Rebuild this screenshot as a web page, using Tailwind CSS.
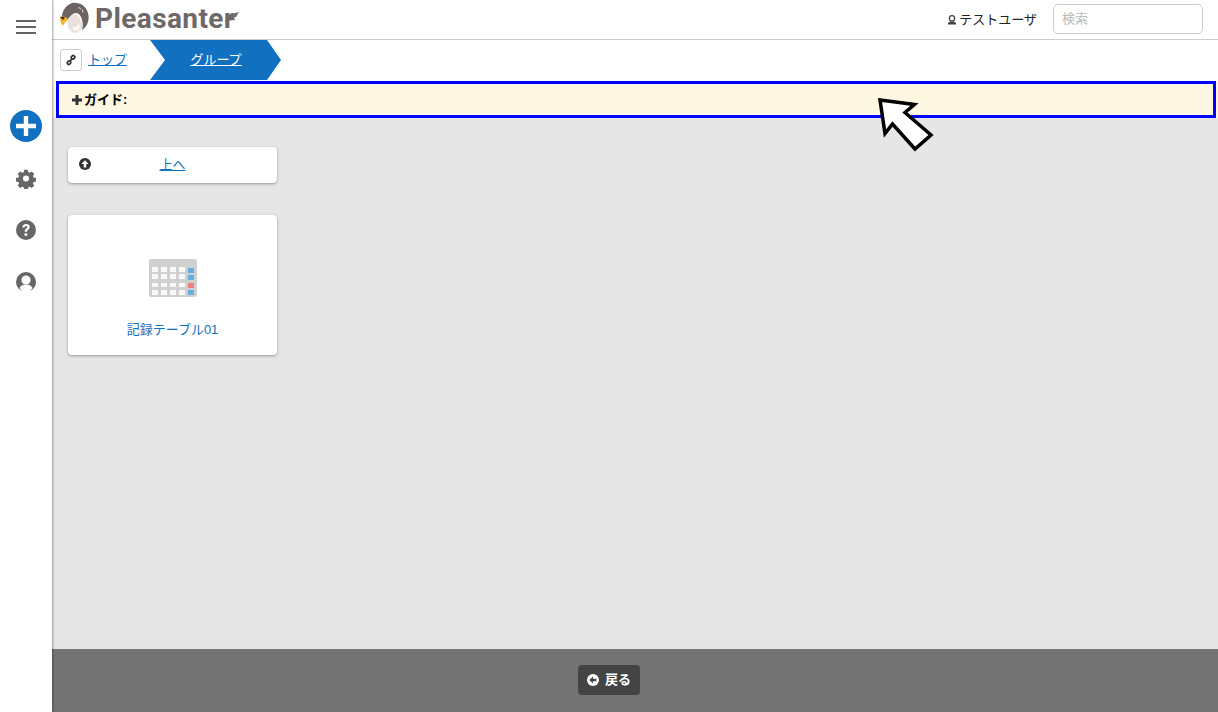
<!DOCTYPE html>
<html lang="ja">
<head>
    <meta charset="UTF-8">
    <script src="https://cdn.jsdelivr.net/npm/@tailwindcss/browser@4"></script>
    <title>Pleasanter</title>
</head>
<body class="bg-white">
    <div class="relative flex w-[1218px] h-[712px] overflow-hidden text-[13px] text-black font-['Liberation_Sans','Noto_Sans_CJK_JP',sans-serif]">
        <!-- side menu -->
        <div class="relative z-10 flex flex-col items-center w-[52px] shrink-0 bg-white shadow-[1px_0_2px_rgba(0,0,0,0.35)]">
            <div class="flex flex-col gap-[4px] w-[20px] mt-[20px]">
                <div class="h-[2px] bg-[#666]"></div>
                <div class="h-[2px] bg-[#666]"></div>
                <div class="h-[2px] bg-[#666]"></div>
            </div>
            <div class="relative w-[32px] h-[32px] mt-[76px] rounded-full bg-[#1170bf]">
                <svg viewBox="0 0 32 32" class="w-[32px] h-[32px]"><path d="M13.800 6h4.400v7.800H26v4.400h-7.800V26h-4.400v-7.800H6v-4.400h7.800z" fill="#fff"/></svg>
            </div>
            <svg viewBox="0 0 24 24" class="w-[22px] h-[22px] mt-[25px]" fill="#666"><path fill-rule="evenodd" d="M10 2.500h4l.6 2.800 1.700.7 2.400-1.600 2.800 2.900-1.500 2.400.7 1.700 2.800.6v4l-2.800.6-.7 1.700 1.500 2.400-2.800 2.800-2.400-1.500-1.700.7-.6 2.800h-4l-.6-2.800-1.700-.7-2.400 1.500-2.800-2.800 1.500-2.400-.7-1.700-2.800-.6v-4l2.800-.6.7-1.700-1.500-2.400 2.800-2.900 2.400 1.600 1.700-.7zM12 9a3.500 3.500 0 1 0 0 7 3.500 3.500 0 0 0 0-7z" transform="translate(.6 .6) scale(.95)"/></svg>
            <svg viewBox="0 0 20 20" class="w-[20px] h-[20px] mt-[31px]"><circle cx="10" cy="10" r="10" fill="#666"/><path d="M6.300 7.600c.1-2.200 1.700-3.500 3.800-3.500 2.200 0 3.700 1.300 3.700 3 0 2.500-2.700 2.500-2.700 4.600H8.700c0-3 2.500-3.200 2.500-4.500 0-.7-.5-1.100-1.200-1.100-.8 0-1.200.5-1.300 1.500z" fill="#fff"/><circle cx="9.900" cy="14.500" r="1.500" fill="#fff"/></svg>
            <svg viewBox="0 0 20 20" class="w-[20px] h-[20px] mt-[32px]"><circle cx="10" cy="10" r="10" fill="#666"/><circle cx="10" cy="8" r="4.600" fill="#fff"/><path d="M3.500 16c1.200-2.600 3.500-3.600 6.500-3.600s5.300 1 6.500 3.600l-3 4h-7z" fill="#fff"/></svg>
        </div>

        <!-- main -->
        <div class="flex flex-col flex-1 min-w-0">
            <header class="flex items-center h-[40px] shrink-0 border-b border-[#ccc] bg-white">
                <svg viewBox="0 0 32 32" class="w-[32px] h-[32px] ml-[6px] mb-[3px]">
                    <path d="M10 17c1-3 5-5 9-4 3 2 5 7 5 13-2 3-5 5-8 5-3-1-5-4-6-7z" fill="#e9e1da"/>
                    <path d="M14 24c3 2 5 1 7-3l1 5c-1 2-4 3-6 3z" fill="#fbf8f5"/>
                    <path d="M4 15c0-6 4-12 10-14 8-1 14 3 16 10 2 7-1 14-6 17 1-4 1-7 0-10-1-4-3-7-6-7-3 0-6 3-9 7z" fill="#6b6462"/>
                    <path d="M20 5c2 0 3 1 3 3-1-1-2-2-3-3zM24 7c1 1 2 2 1 4-1-1-1-3-1-4z" fill="#e9e1da"/>
                    <path d="M2 15c3-1 6 0 7 1l1 2c-2 1-4 3-5 6-2-2-3-5-3-9z" fill="#f0b429"/>
                    <path d="M2 15c2-.6 4-.3 5 .6l-2 2.400z" fill="#3a3433"/>
                </svg>
                <div class="flex items-start ml-[5px] mb-[1px]">
                    <span class="font-['Roboto',sans-serif] font-bold text-[28px] leading-none tracking-[.4px] text-[#6f6869]">Pleasanter</span>
                    <svg viewBox="0 0 14 10" class="w-[14px] h-[10px] -ml-[9px] mt-[7px]"><path d="M0 10l2-5 5-3 7-2-3 5-2 .5 1 2.500-5 .5-3 1.500z" fill="#6f6869"/></svg>
                </div>
                <div class="flex items-center ml-auto">
                    <svg viewBox="0 0 12 12" class="w-[10px] h-[10px] mt-[1px]"><circle cx="6" cy="4" r="3.200" fill="none" stroke="#444" stroke-width="1.500"/><path d="M1 11.500c0-3 2-4 5-4s5 1 5 4z" fill="#444"/></svg>
                    <span class="ml-[2px] text-[13px] text-[#222]">テストユーザ</span>
                    <div class="flex items-center w-[150px] h-[30px] mb-[1px] ml-[16px] mr-[15px] px-[8px] rounded-[5px] border border-[#ccc] bg-white text-[13px] text-[#bbb]">検索</div>
                </div>
            </header>

            <nav class="flex items-stretch h-[41px] shrink-0 bg-white">
                <div class="flex items-center ml-[8px] mb-[1px]">
                    <div class="flex items-center justify-center w-[22px] h-[22px] rounded-[3px] border border-[#ccc]">
                        <svg viewBox="0 0 12 12" class="w-[12px] h-[12px]" fill="none" stroke="#333" stroke-width="1.700"><rect x="6.200" y="1.800" width="3.600" height="3" rx="1.200" transform="rotate(-45 8 3.300)"/><rect x="2.200" y="7.200" width="3.600" height="3" rx="1.200" transform="rotate(-45 4 8.700)"/><path d="M5.200 6.800l1.600-1.600"/></svg>
                    </div>
                    <a href="#" class="ml-[6px] text-[13px] text-[#1170bf] underline">トップ</a>
                </div>
                <a href="#" class="flex items-center justify-center w-[131px] h-[40px] ml-[23px] pl-[1px] text-[13px] text-white underline bg-[#1170bf] [clip-path:polygon(0_0,117px_0,131px_50%,117px_100%,0_100%,15px_50%)]">グループ</a>
            </nav>

            <div class="shrink-0 pl-[4px] pr-[2px] bg-[#fef7e2]">
                <div class="flex items-center h-[37px] pl-[13px] border-[3px] border-[#0000ff] font-bold text-[13px]">
                    <svg viewBox="0 0 10 10" class="w-[10px] h-[10px] mr-[2px]"><path d="M3.500 0h3v3.500H10v3H6.500V10h-3V6.500H0v-3h3.500z" fill="#333"/></svg>
                    <span>ガイド:</span>
                </div>
            </div>

            <main class="flex-1 pl-[16px] bg-[#e6e6e6]">
                <div class="relative flex items-center justify-center w-[209px] h-[36px] mt-[29px] rounded-[4px] bg-white shadow-[0_1px_3px_rgba(0,0,0,0.35)]">
                    <svg viewBox="0 0 12 12" class="absolute left-[11px] top-[11px] w-[12px] h-[12px]"><circle cx="6" cy="6" r="6" fill="#333"/><path d="M6 2.300L9.600 6H7.300v3.400H4.700V6H2.400z" fill="#fff"/></svg>
                    <a href="#" class="text-[13px] text-[#1170bf] underline">上へ</a>
                </div>
                <div class="flex flex-col items-center w-[209px] h-[140px] mt-[32px] rounded-[4px] bg-white shadow-[0_1px_3px_rgba(0,0,0,0.35)]">
                    <svg viewBox="0 0 48 38" class="w-[48px] h-[38px] mt-[44px]">
                        <rect width="48" height="38" rx="2" fill="#d0d0d0"/>
                        <g fill="#f9f9f9">
                            <rect x="3" y="8" width="6" height="5"/><rect x="12" y="8" width="6" height="5"/><rect x="21" y="8" width="6" height="5"/><rect x="30" y="8" width="6" height="5"/>
                            <rect x="3" y="15" width="6" height="5"/><rect x="12" y="15" width="6" height="5"/><rect x="21" y="15" width="6" height="5"/><rect x="30" y="15" width="6" height="5"/>
                            <rect x="3" y="24" width="6" height="4"/><rect x="12" y="24" width="6" height="4"/><rect x="21" y="24" width="6" height="4"/><rect x="30" y="24" width="6" height="4"/>
                            <rect x="3" y="31" width="6" height="5"/><rect x="12" y="31" width="6" height="5"/><rect x="21" y="31" width="6" height="5"/><rect x="30" y="31" width="6" height="5"/>
                        </g>
                        <rect x="39" y="9" width="6" height="5" fill="#64afdf"/>
                        <rect x="39" y="16" width="6" height="5" fill="#64afdf"/>
                        <rect x="39" y="24" width="6" height="5" fill="#ee8080"/>
                        <rect x="39" y="31" width="6" height="5" fill="#64afdf"/>
                    </svg>
                    <a href="#" class="mt-[23px] text-[13px] text-[#1170bf]">記録テーブル01</a>
                </div>
            </main>

            <footer class="flex items-center justify-center h-[63px] shrink-0 pr-[52px] bg-[#737373]">
                <div class="flex items-center h-[30px] px-[9px] mb-[1px] rounded-[4px] bg-[#444] text-white font-bold text-[13px]">
                    <svg viewBox="0 0 12 12" class="w-[12px] h-[12px] mr-[6px]"><circle cx="6" cy="6" r="6" fill="#fff"/><path d="M2.300 6L6 2.400v2.300h3.400v2.600H6v2.300z" fill="#444"/></svg>
                    <span>戻る</span>
                </div>
            </footer>
        </div>

        <!-- annotation arrow -->
        <svg viewBox="0 0 60 60" class="absolute left-[875px] top-[94px] z-20 w-[60px] h-[60px]">
            <path d="M5 6L39.500 10.500 30 18.500 56 41 40 55 17.500 30 10 39.500z" fill="#fff" stroke="#000" stroke-width="3.500" stroke-linejoin="miter"/>
        </svg>
    </div>
</body>
</html>
